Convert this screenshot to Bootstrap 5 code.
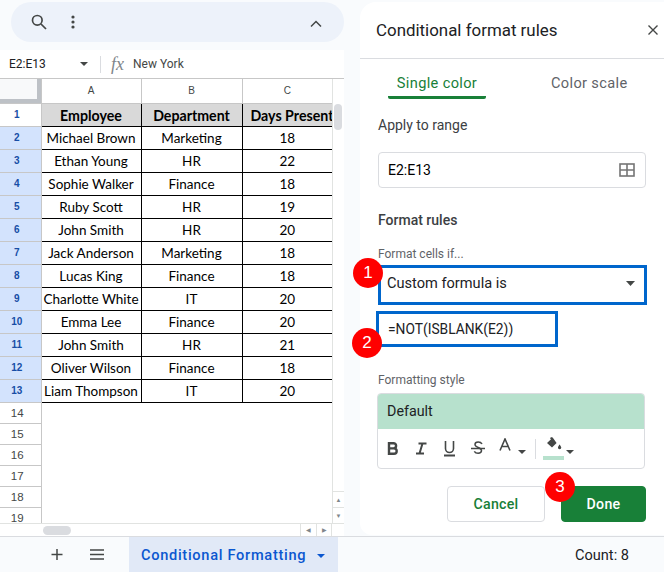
<!DOCTYPE html>
<html lang="en">
<head>
<meta charset="utf-8">
<title>Conditional format rules</title>
<link href="https://cdn.jsdelivr.net/npm/bootstrap@5.3.0/dist/css/bootstrap.min.css" rel="stylesheet">
<style>
html,body{height:572px;overflow:hidden}
body{background:#f9fbfd;font-family:Roboto,sans-serif;color:#202124;width:664px}
.appmain{height:536px}
.sheetside{width:344px;flex:none;padding-top:2px}
.toolpill{height:40px;margin-left:11px;background:#edf2fa;border-radius:20px;padding-left:14px;padding-right:22px}
.toolbtn{width:27px;height:36px}
.dotsbtn{margin-left:7px}
.chevron{margin-top:3px}
.fxbar{height:29px;margin-top:8px;background:#fff;border-bottom:1px solid #c7c7c7;font-size:12px}
.namebox{width:101px;padding-left:9px;padding-right:12px;border-right:1px solid #dadce0;height:17px;color:#202124}
.fxtext{color:#444746}
.fxicon{font-family:"Liberation Serif",serif;font-style:italic;color:#80868b;font-size:18px;width:22px;margin:0 0 0 10px;line-height:1}
.gridwrap{background:#fff;height:457px;overflow:hidden;width:344px}
.gridbody{height:444px;overflow:hidden;flex:none}
.sheetgrid{border-collapse:collapse;table-layout:fixed;width:332px;font-family:Lato,sans-serif;font-size:13.5px;line-height:17px;color:#000}
.sheetgrid th,.sheetgrid td{padding:0;text-align:center;overflow:hidden;white-space:nowrap}
.sheetgrid .rowh{width:41px;background:#fff;color:#444746;font:400 10px/14px "Liberation Sans",sans-serif;border-right:1px solid #c7c7c7;border-bottom:1px solid #c7c7c7;padding-right:7px}
.sheetgrid .rowh-on{background:#d3e3fd;color:#174ea6;font-weight:700}
.sheetgrid .rowh-one{color:#174ea6;font-weight:700;background:#fff}
.colh{height:24px;font:400 10px/14px "Liberation Sans",sans-serif!important;color:#444746;border-right:1px solid #c7c7c7;border-bottom:1px solid #c7c7c7}
.colh:last-child{border-right:0}
.colh.corner{background:#f8f9fa;box-shadow:inset -4px -4px 0 #bdc1c6}
.datarow{height:23px}
.datarow td,.datarow th{border:1px solid #000;padding-top:2px!important}
.datarow td:last-child,.datarow th:last-child{border-right:0}
.datarow .rowh{padding-top:0!important}
.datarow td.rowh{border-right:1px solid #c7c7c7;border-top-color:#c7c7c7;border-bottom-color:#c7c7c7;border-left:0}
.datarow .rowh + *{border-left:0}
.headrow th{background:#d9d9d9;font-weight:700;font-size:14.2px;border-top-color:#c7c7c7}
.sheetgrid .clipcell{text-align:left;padding-left:8px}
.blankrow{height:21px}
.sheetgrid .blankrow .rowh{font-size:11.5px;color:#444746;font-weight:400;padding-right:6px}
.vscroll{width:12px;flex:none;border-left:1px solid #e1e3e1;background:#fff}
.vthumb{width:8px;height:26px;background:#dadce0;border-radius:4px;margin:25px 0 0 1px}
.scrollbtn{height:16px;border-top:1px solid #e1e3e1;color:#80868b;font-size:6px;line-height:15px;text-align:center}
.hscroll{height:13px;background:#fff;border-top:1px solid #e1e3e1}
.hthumb{width:28px;height:9px;background:#dadce0;border-radius:5px;margin-left:43px}
.hbtn{width:16px;height:100%;border-left:1px solid #e1e3e1;color:#80868b;font-size:6px;line-height:11px;text-align:center}
.hend{margin-right:12px;border-right:1px solid #e1e3e1}
.panel{width:304px;height:533px;margin:2px 0 0 16px;background:#fff;border-top-left-radius:16px;border-bottom-left-radius:12px;position:relative}
.panelhead{height:57px;padding:0 5px 0 16px;border-bottom:1px solid #dadce0}
.paneltitle{font-size:16.9px;margin:0;font-weight:400;color:#202124}
.tabset{height:40px;font-size:14.6px;letter-spacing:.35px;padding-left:28px}
.tabone{width:98px;height:40px;color:#188038;text-align:center;border-bottom:3px solid #188038;border-radius:0 0 2px 2px;padding-top:14px;font-weight:400}
.tabtwo{color:#5f6368;margin-left:65px;padding-top:14px;height:40px}
.seclabel{font-size:14px;font-weight:400;color:#3c4043;margin:0;padding-left:18px}
.applylabel{margin-top:16px}
.rangebox{margin:16px 18px 0;height:36px;border:1px solid #dadce0;border-radius:4px;padding:0 10px 0 9px;font-size:14px;color:#000;width:268px}
.seclabelb{font-weight:500;font-size:14px;margin-top:22px}
.smalllabel{font-size:12px;color:#5f6368;padding-left:18px;margin:0}
.ifglabel{margin-top:14px}
.condsel{margin:2px 0 0 18px;width:269px;height:40px;border:3px solid #0066cc;padding:0 9px 3px 6px;font-size:14.6px;color:#202124}
.formulabox{margin:6px 0 0 16px;width:182px;height:36px;border:3px solid #0066cc;padding-left:9px;font-size:13.8px;color:#202124}
.stylelabel{margin-top:24px;margin-bottom:4px}
.stylebox{margin:0 0 0 17px;width:268px;height:76px;border:1px solid #dadce0;border-radius:4px;overflow:hidden}
.stylehead{height:35px;background:#b7e1cd;padding-left:9px;font-size:14.3px;color:#202124}
.stylebar{height:39px;padding-left:9px;color:#444746}
.fmtbtn{width:28px;height:24px}
.fmtcolor{width:19px}
.fmtsep{width:1px;height:20px;background:#dadce0;margin:0 7px 0 9px}
.fillswatch{width:21px;height:4px;background:#b7e1cd;margin-top:4px}
.caretlow{margin-top:6px}
.fillcaret{margin-left:2px}
.actions{margin:17px 18px 0 0;gap:16px}
.btncancel,.btndone{height:36px;font-size:14.2px;font-weight:500;letter-spacing:.25px;border-radius:4px;padding:2px 0 0}
.btncancel{width:98px;color:#188038;border:1px solid #dadce0;background:#fff}
.btndone{width:85px;color:#fff;background:#188038;border:1px solid #188038}
.stepdot{position:absolute;width:30px;height:30px;border-radius:50%;background:#f00;color:#fff;font:400 17px/30px "Liberation Sans",sans-serif;text-align:center;z-index:2}
.stepa{left:-7px;top:256px}
.stepb{left:-8px;top:326px}
.stepc{left:185px;top:470px}
.bottombar{height:36px;border-top:1px solid #dadce0}
.plusbtn{margin-left:50px;width:14px;color:#444746}
.menubtn{margin-left:25px;width:16px}
.sheettab{margin-left:24px;width:209px;height:35px;background:#e1e9f7;color:#0b57d0;font-weight:500;font-size:14.6px;letter-spacing:.7px;padding:3px 0 0 12px}
.tabcaret{margin-left:11px}
.countlabel{margin-left:auto;margin-right:35px;font-size:14.6px;color:#202124;padding-top:2px}
</style>
</head>
<body>
<div class="appmain d-flex">
  <div class="sheetside">
    <div class="toolpill d-flex align-items-center">
      <div class="toolbtn d-flex align-items-center justify-content-center">
        <svg width="18" height="18" viewBox="0 0 18 18" fill="none" stroke="#444746" stroke-width="1.7"><circle cx="7.3" cy="7.3" r="4.8"/><path d="M11 11l5 5"/></svg>
      </div>
      <div class="toolbtn dotsbtn d-flex align-items-center justify-content-center">
        <svg width="4" height="14" viewBox="0 0 4 14" fill="#444746"><circle cx="2" cy="2" r="1.6"/><circle cx="2" cy="7" r="1.6"/><circle cx="2" cy="12" r="1.6"/></svg>
      </div>
      <svg class="ms-auto chevron" width="12" height="8" viewBox="0 0 12 8" fill="none" stroke="#444746" stroke-width="1.5"><path d="M1 6.5l5-5 5 5"/></svg>
    </div>
    <div class="fxbar d-flex align-items-center">
      <div class="namebox d-flex align-items-center justify-content-between">
        <span>E2:E13</span>
        <svg width="8" height="4" viewBox="0 0 8 4" fill="#444746"><path d="M0 0h8L4 4z"/></svg>
      </div>
      <span class="fxicon">fx</span>
      <span class="fxtext">New York</span>
    </div>
    <div class="gridwrap d-flex flex-column">
      <div class="gridbody d-flex">
        <div>
          <table class="sheetgrid">
            <colgroup><col style="width:41px"><col style="width:100px"><col style="width:101px"><col style="width:90px"></colgroup>
            <tr><th class="colh corner"></th><th class="colh">A</th><th class="colh">B</th><th class="colh">C</th></tr>
            <tr class="datarow headrow"><td class="rowh rowh-one">1</td><th>Employee</th><th>Department</th><th class="clipcell">Days Present</th></tr>
            <tr class="datarow"><td class="rowh rowh-on">2</td><td>Michael Brown</td><td>Marketing</td><td>18</td></tr>
            <tr class="datarow"><td class="rowh rowh-on">3</td><td>Ethan Young</td><td>HR</td><td>22</td></tr>
            <tr class="datarow"><td class="rowh rowh-on">4</td><td>Sophie Walker</td><td>Finance</td><td>18</td></tr>
            <tr class="datarow"><td class="rowh rowh-on">5</td><td>Ruby Scott</td><td>HR</td><td>19</td></tr>
            <tr class="datarow"><td class="rowh rowh-on">6</td><td>John Smith</td><td>HR</td><td>20</td></tr>
            <tr class="datarow"><td class="rowh rowh-on">7</td><td>Jack Anderson</td><td>Marketing</td><td>18</td></tr>
            <tr class="datarow"><td class="rowh rowh-on">8</td><td>Lucas King</td><td>Finance</td><td>18</td></tr>
            <tr class="datarow"><td class="rowh rowh-on">9</td><td>Charlotte White</td><td>IT</td><td>20</td></tr>
            <tr class="datarow"><td class="rowh rowh-on">10</td><td>Emma Lee</td><td>Finance</td><td>20</td></tr>
            <tr class="datarow"><td class="rowh rowh-on">11</td><td>John Smith</td><td>HR</td><td>21</td></tr>
            <tr class="datarow"><td class="rowh rowh-on">12</td><td>Oliver Wilson</td><td>Finance</td><td>18</td></tr>
            <tr class="datarow"><td class="rowh rowh-on">13</td><td>Liam Thompson</td><td>IT</td><td>20</td></tr>
            <tr class="blankrow"><td class="rowh">14</td><td colspan="3"></td></tr>
            <tr class="blankrow"><td class="rowh">15</td><td colspan="3"></td></tr>
            <tr class="blankrow"><td class="rowh">16</td><td colspan="3"></td></tr>
            <tr class="blankrow"><td class="rowh">17</td><td colspan="3"></td></tr>
            <tr class="blankrow"><td class="rowh">18</td><td colspan="3"></td></tr>
            <tr class="blankrow"><td class="rowh">19</td><td colspan="3"></td></tr>
          </table>
        </div>
        <div class="vscroll d-flex flex-column">
          <div class="vthumb"></div>
          <div class="mt-auto scrollbtn">&#9650;</div>
          <div class="scrollbtn">&#9660;</div>
        </div>
      </div>
      <div class="hscroll d-flex align-items-center">
        <div class="hthumb"></div>
        <div class="hbtn ms-auto">&#9664;</div>
        <div class="hbtn hend">&#9654;</div>
      </div>
    </div>
  </div>
  <aside class="panel d-flex flex-column">
    <div class="panelhead d-flex align-items-center justify-content-between">
      <h1 class="paneltitle">Conditional format rules</h1>
      <svg width="12" height="12" viewBox="0 0 12 12" stroke="#444746" stroke-width="1.4"><path d="M1.5 1.5l9 9M10.5 1.5l-9 9"/></svg>
    </div>
    <div class="tabset d-flex">
      <div class="tabone">Single color</div>
      <div class="tabtwo">Color scale</div>
    </div>
    <p class="seclabel applylabel">Apply to range</p>
    <div class="rangebox d-flex align-items-center justify-content-between">
      <span>E2:E13</span>
      <svg width="16" height="14" viewBox="0 0 16 14" fill="none" stroke="#757575" stroke-width="1.6"><rect x="1" y="1" width="14" height="12"/><path d="M8 1v12M1 7h14"/></svg>
    </div>
    <p class="seclabel seclabelb">Format rules</p>
    <p class="smalllabel ifglabel">Format cells if...</p>
    <div class="condsel d-flex align-items-center justify-content-between">
      <span>Custom formula is</span>
      <svg width="9" height="5" viewBox="0 0 9 5" fill="#444746"><path d="M0 0h9L4.5 5z"/></svg>
    </div>
    <div class="formulabox d-flex align-items-center">=NOT(ISBLANK(E2))</div>
    <p class="smalllabel stylelabel">Formatting style</p>
    <div class="stylebox">
      <div class="stylehead d-flex align-items-center">Default</div>
      <div class="stylebar d-flex align-items-center">
        <span class="fmtbtn d-flex align-items-center"><svg width="11" height="13" viewBox="0 0 11 13" fill="none" stroke="#444746" stroke-width="2.4"><path d="M2 1.200v10.600h5a2.700 2.700 0 000-5.400H2h4.500a2.600 2.600 0 000-5.200z"/></svg></span>
        <span class="fmtbtn d-flex align-items-center"><svg width="12" height="13" viewBox="0 0 12 13" fill="none" stroke="#444746" stroke-width="2"><path d="M3.500 1.500h8M1 11.500h8M7.500 1.500l-3 10"/></svg></span>
        <span class="fmtbtn d-flex align-items-center"><svg width="13" height="17" viewBox="0 0 13 17" fill="none" stroke="#444746" stroke-width="1.600"><path d="M2.500 1v7.500a4 4 0 008 0V1"/><path d="M1 15.500h11" stroke-width="1.800"/></svg></span>
        <span class="fmtbtn d-flex align-items-center"><svg width="14" height="15" viewBox="0 0 14 15" fill="none" stroke="#444746" stroke-width="1.500"><path d="M11 3c-.7-1.300-2-1.900-3.800-1.900C5.300 1.100 4 2 4 3.600c0 3.400 6.500 2.400 6.500 6 0 1.700-1.500 2.700-3.400 2.700-1.700 0-3-.7-3.800-2"/><path d="M0 7.500h14"/></svg></span>
        <span class="fmtbtn fmtcolor d-flex align-items-center"><svg width="12" height="13" viewBox="0 0 12 13" fill="none" stroke="#444746" stroke-width="1.600" class="mb-2"><path d="M1 12.500L6 1l5 11.500M2.700 8.500h6.600"/></svg></span>
        <svg width="8" height="4" viewBox="0 0 8 4" fill="#444746" class="caretlow"><path d="M0 0h8L4 4z"/></svg>
        <span class="fmtsep"></span>
        <span class="d-flex flex-column align-items-center">
          <svg width="16" height="15" viewBox="0 0 16 15" fill="#444746"><path d="M6 0l1.200 1.200L10.600 6 6 10.500 1 6 5 2.200 3.800 1zM13.600 7.500s1.700 2 1.700 3.100a1.700 1.700 0 01-3.400 0c0-1.100 1.700-3.100 1.700-3.100z"/></svg>
          <span class="fillswatch"></span>
        </span>
        <svg width="8" height="4" viewBox="0 0 8 4" fill="#444746" class="caretlow fillcaret"><path d="M0 0h8L4 4z"/></svg>
      </div>
    </div>
    <div class="actions d-flex justify-content-end">
      <button class="btn btncancel" type="button">Cancel</button>
      <button class="btn btndone" type="button">Done</button>
    </div>
    <span class="stepdot stepa">1</span>
    <span class="stepdot stepb">2</span>
    <span class="stepdot stepc">3</span>
  </aside>
</div>
<footer class="bottombar d-flex align-items-center">
  <svg class="plusbtn" width="11" height="11" viewBox="0 0 11 11" stroke="#444746" stroke-width="1.500"><path d="M5.500 0v11M0 5.500h11"/></svg>
  <svg class="menubtn" width="14" height="11" viewBox="0 0 14 11" stroke="#444746" stroke-width="1.500"><path d="M0 1h14M0 5.500h14M0 10h14"/></svg>
  <div class="sheettab d-flex align-items-center">
    <span>Conditional Formatting</span>
    <svg class="tabcaret" width="8" height="4" viewBox="0 0 8 4" fill="#0b57d0"><path d="M0 0h8L4 4z"/></svg>
  </div>
  <span class="countlabel">Count: 8</span>
</footer>
<script src="https://cdn.jsdelivr.net/npm/bootstrap@5.3.0/dist/js/bootstrap.bundle.min.js"></script>
</body>
</html>
